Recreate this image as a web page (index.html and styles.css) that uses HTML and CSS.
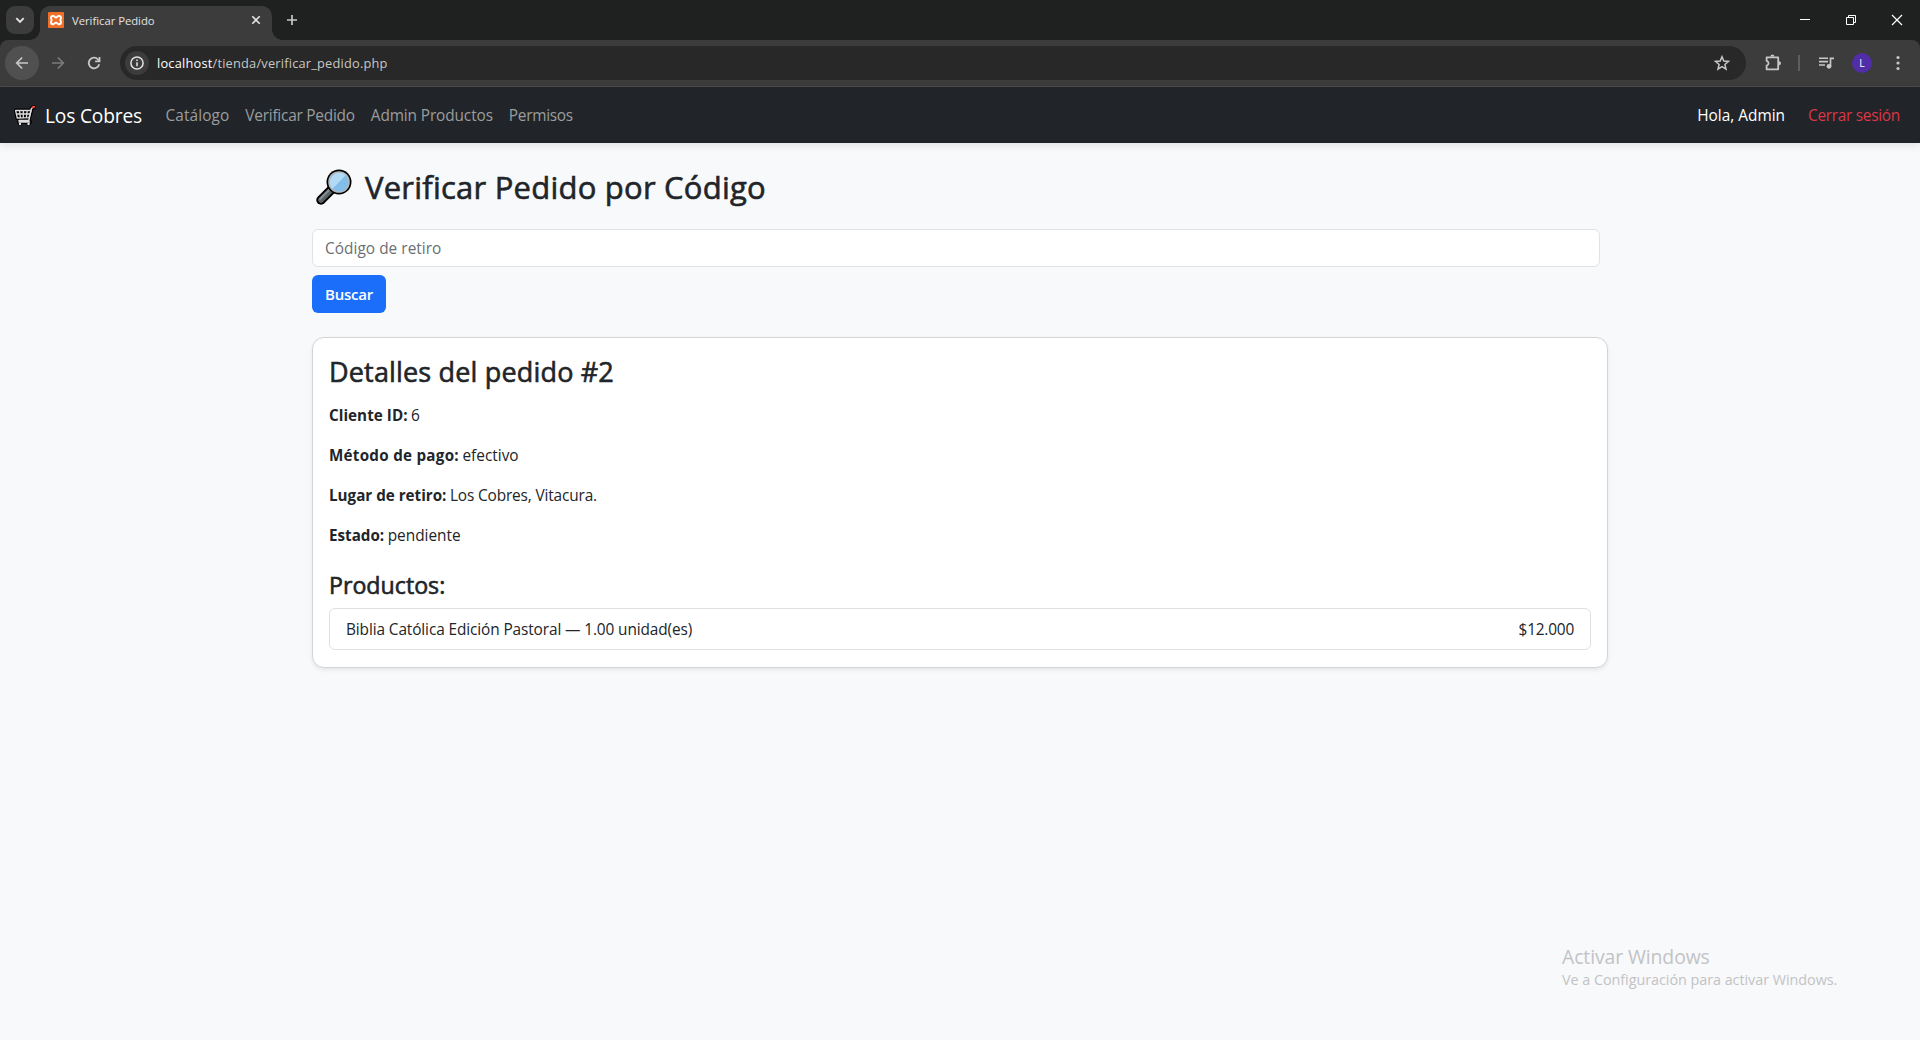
FILE: index.html
```html
<!DOCTYPE html>
<html lang="es">
<head>
<meta charset="utf-8">
<title>Verificar Pedido</title>
<link rel="stylesheet" href="styles.css">
</head>
<body>
<header class="browser">
  <div class="tabstrip">
    <div class="tab-search">
      <svg width="28" height="28" viewBox="0 0 28 28" fill="none" stroke="#e3e3e3" stroke-width="1.9"><path d="M10.3 12.2l3.7 3.7 3.7-3.7"/></svg>
    </div>
    <div class="tab">
      <svg width="16" height="16" viewBox="0 0 16 16"><rect width="16" height="16" rx="1" fill="#f0702a"/><path d="M5 4h.5C6.500 4 6.800 5.600 8 5.600S9.500 4 10.500 4h.5a2 2 0 0 1 2 2c0 .9-.7 1.300-.7 2.100s.7 1.200.7 2.100a2 2 0 0 1-2 2h-.5c-1 0-1.300-1.600-2.500-1.600s-1.500 1.600-2.500 1.600H5a2 2 0 0 1-2-2C3 9.300 3.700 8.900 3.700 8.100S3 6.900 3 6a2 2 0 0 1 2-2z" fill="none" stroke="#fff" stroke-width="1.900"/></svg>
      <span class="tab-title">Verificar Pedido</span>
      <svg class="tab-close" width="16" height="16" viewBox="0 0 16 16" stroke="#e3e3e3" stroke-width="1.600"><path d="M4.300 4.300l7.400 7.400M11.700 4.300l-7.400 7.400"/></svg>
    </div>
    <svg class="new-tab" width="16" height="16" viewBox="0 0 16 16" stroke="#c7c7c7" stroke-width="1.700"><path d="M8 3v10M3 8h10"/></svg>
    <div class="window-controls">
      <svg width="46" height="40" viewBox="0 0 46 40"><path d="M18 19.500h10" stroke="#fff"/></svg>
      <svg width="46" height="40" viewBox="0 0 46 40" fill="none" stroke="#fff"><path d="M18.500 17.500h7v7h-7zM20.500 17.500v-2h7v7h-2"/></svg>
      <svg width="46" height="40" viewBox="0 0 46 40" stroke="#fff" stroke-width="1.200"><path d="M18 15l10 10M28 15l-10 10"/></svg>
    </div>
  </div>
  <div class="toolbar">
    <div class="nav-button nav-button-active">
      <svg width="20" height="20" viewBox="0 0 20 20" fill="none" stroke="#c7c7c7" stroke-width="1.700"><path d="M16 10H5M10.200 4.500L4.700 10l5.500 5.500"/></svg>
    </div>
    <div class="nav-button">
      <svg width="20" height="20" viewBox="0 0 20 20" fill="none" stroke="#7b7b7b" stroke-width="1.700"><path d="M4 10h11M9.800 4.500l5.500 5.500-5.500 5.500"/></svg>
    </div>
    <div class="nav-button">
      <svg width="20" height="20" viewBox="0 0 20 20" fill="none" stroke="#c7c7c7" stroke-width="1.800"><path d="M15.200 11.200A5.300 5.300 0 1 1 14 6.500l1.200 1.500"/><path d="M15.500 4v4.400h-4.400"/></svg>
    </div>
    <div class="omnibox">
      <div class="site-info">
        <svg width="16" height="16" viewBox="0 0 16 16" fill="none" stroke="#e3e3e3" stroke-width="1.500"><circle cx="8" cy="8" r="6.100"/><path d="M8 7.300v4M8 4.600v1.500"/></svg>
      </div>
      <span class="url"><span class="host">localhost</span>/tienda/verificar_pedido.php</span>
      <svg class="star" width="18" height="18" viewBox="0 0 18 18" fill="none" stroke="#c7c7c7" stroke-width="1.500"><path d="M9 2.700l1.800 4.300 4.700.4-3.600 3.100 1.100 4.600L9 12.600l-4 2.500 1.100-4.600-3.600-3.100 4.700-.4z"/></svg>
    </div>
    <div class="actions">
      <svg class="extensions" width="20" height="20" viewBox="0 0 20 20"><path d="M3.600 4.300h11.600v12H3.600v-3.600c2.600-.6 2.600-4.200 0-4.800z" fill="none" stroke="#c7c7c7" stroke-width="1.800" stroke-linejoin="round"/><path d="M7.400 3.600a2 2 0 0 1 4 0zM16 8.200a2 2 0 0 1 0 4z" fill="#c7c7c7"/></svg>
      <span class="divider"></span>
      <svg class="media" width="18" height="18" viewBox="0 0 18 18"><path d="M2 4.300h9M2 7.600h9M2 11h6" stroke="#c7c7c7" stroke-width="1.600"/><path d="M13.500 12V4.300H17" fill="none" stroke="#c7c7c7" stroke-width="1.700"/><circle cx="12" cy="12.300" r="2.400" fill="#c7c7c7"/></svg>
      <span class="avatar">L</span>
      <svg class="menu" width="4" height="16" viewBox="0 0 4 16" fill="#c7c7c7"><circle cx="2" cy="2.500" r="1.600"/><circle cx="2" cy="8" r="1.600"/><circle cx="2" cy="13.500" r="1.600"/></svg>
    </div>
  </div>
</header>

<nav class="navbar">
  <div class="brand">
    <svg width="22" height="22" viewBox="0 0 22 22" fill="none" stroke-linecap="round" stroke-linejoin="round"><path d="M20 2l-2.200 1-3 11.500H5.500M1.800 5.500h15M3 11.500h12M1.800 5.500L3.500 13M5 17h11M6 19h.1M14.500 19h.1" stroke="#000" stroke-width="4"/><path d="M1.600 5.500h15.400L15 12.600 3.300 13zM2.400 9h13.600M5.500 5.500l.9 7.300M9.300 5.500v7.300M13.200 5.500l-.8 7.300" stroke="#dcdcdc" stroke-width="1.300"/><path d="M19 2.300l-1.600 1.500-2.600 11.800H5M5 17h10.500" stroke="#dcdcdc" stroke-width="1.500"/><path d="M6 19h.1M14.500 19h.1" stroke="#dcdcdc" stroke-width="2.400"/><path d="M18.800 2.300l1.400-.5" stroke="#f0453a" stroke-width="2.200"/></svg>
    <span class="brand-name">Los Cobres</span>
  </div>
  <div class="links">
    <a class="link-catalogo">Catálogo</a>
    <a class="link-verificar">Verificar Pedido</a>
    <a class="link-productos">Admin Productos</a>
    <a class="link-permisos">Permisos</a>
  </div>
  <div class="session">
    <span>Hola, Admin</span>
    <a class="logout">Cerrar sesión</a>
  </div>
</nav>

<main class="container">
  <h1>
    <svg width="38" height="38" viewBox="0 0 38 38"><path d="M16.500 21.500L6 32" stroke="#000" stroke-width="9.500" stroke-linecap="round"/><path d="M15.500 22.500L6 32" stroke="#596367" stroke-width="5.500" stroke-linecap="round"/><path d="M14 22L5 31" stroke="#859095" stroke-width="1.800" stroke-linecap="round"/><circle cx="24" cy="14" r="12.500" fill="#000"/><circle cx="24" cy="14" r="10.800" fill="#b9b9b9"/><circle cx="24" cy="14" r="9.600" fill="#83bdea"/><path d="M17.300 20.900a9.600 9.600 0 0 1 13.400-13.700z" fill="#b3daf4"/></svg>
    <span>Verificar Pedido por Código</span>
  </h1>
  <form class="search">
    <input type="text" placeholder="Código de retiro">
    <button type="button">Buscar</button>
  </form>
  <section class="card">
    <h2>Detalles del pedido #2</h2>
    <p><strong class="label-cliente">Cliente ID:</strong><span>6</span></p>
    <p><strong class="label-metodo">Método de pago:</strong><span>efectivo</span></p>
    <p><strong>Lugar de retiro:</strong><span class="lugar">Los Cobres, Vitacura.</span></p>
    <p><strong>Estado:</strong><span>pendiente</span></p>
    <h3>Productos:</h3>
    <ul class="products">
      <li><span class="product-name">Biblia Católica Edición Pastoral — 1.00 unidad(es)</span><span class="price">$12.000</span></li>
    </ul>
  </section>
</main>

<aside class="watermark">
  <div class="watermark-title">Activar Windows</div>
  <div class="watermark-text">Ve a Configuración para activar Windows.</div>
</aside>
</body>
</html>
```

FILE: styles.css
```css
* { box-sizing: border-box; }
body {
  margin: 0;
  height: 1040px;
  overflow: hidden;
  background: #f8f9fb;
  color: #212529;
  font: 15.4px/24px "Open Sans", "Noto Sans", sans-serif;
}
svg { display: block; flex: none; }
h1, h2, h3, p, ul { margin: 0; padding: 0; }

/* Browser frame */
.browser { height: 87px; background: #1f2120; border-bottom: 1px solid #4b4b4b; }
.tabstrip { display: flex; height: 40px; padding-left: 6px; }
.tab-search { width: 28px; height: 28px; margin-top: 6px; border-radius: 9px; background: #3c3c3c; }
.tab {
  position: relative;
  display: flex;
  align-items: center;
  width: 232px;
  height: 34px;
  margin: 6px 0 0 6px;
  padding: 0 8px 6px;
  border-radius: 10px 10px 0 0;
  background: #3c3c3c;
}
.tab::before, .tab::after { content: ""; position: absolute; bottom: 0; width: 10px; height: 10px; }
.tab::before { left: -10px; background: radial-gradient(circle at 0 0, transparent 9.500px, #3c3c3c 10px); }
.tab::after { right: -10px; background: radial-gradient(circle at 100% 0, transparent 9.500px, #3c3c3c 10px); }
.tab-title { flex: 1; margin: 2px 0 0 8px; color: #e3e3e3; font-size: 11.300px; letter-spacing: -.03px; }
.new-tab { margin: 12px 0 0 12px; }
.window-controls { display: flex; margin-left: auto; }
.toolbar {
  display: flex;
  align-items: center;
  height: 46px;
  padding-left: 5px;
  border-radius: 8px 8px 0 0;
  background: #3c3c3c;
}
.nav-button { display: grid; place-items: center; width: 34px; height: 34px; margin-right: 2px; border-radius: 50%; }
.nav-button-active { background: #505050; }
.omnibox {
  display: flex;
  align-items: center;
  width: 1626px;
  height: 34px;
  margin-left: 7px;
  padding: 0 15px 0 5px;
  border-radius: 17px;
  background: #282828;
}
.site-info { display: grid; place-items: center; width: 24px; height: 24px; border-radius: 50%; background: #3c3c3c; }
.url { margin-left: 8px; color: #c7c7c7; font-size: 12.800px; letter-spacing: .21px; }
.host { color: #fff; }
.star { margin-left: auto; }
.actions { display: flex; align-items: center; }
.extensions { margin-left: 17px; }
.divider { width: 2px; height: 16px; margin-left: 15px; background: #5e5e5e; }
.media { margin-left: 17px; }
.avatar {
  width: 20px;
  height: 20px;
  margin-left: 17px;
  border-radius: 50%;
  background: #512da8;
  color: #fff;
  font-size: 10.500px;
  line-height: 20px;
  text-align: center;
}
.menu { margin-left: 24px; }

/* Site navigation */
.navbar {
  display: flex;
  align-items: center;
  height: 56px;
  padding: 2px 20px 0 14px;
  background: #212529;
  box-shadow: 0 2px 8px rgba(0, 0, 0, .1);
}
.brand { display: flex; align-items: center; gap: 9px; color: #fff; }
.brand-name { width: 97px; font-size: 19.200px; letter-spacing: -.18px; white-space: nowrap; }
.links { display: flex; gap: 16px; margin-left: 23.500px; color: #9b9d9e; white-space: nowrap; }
.link-catalogo { letter-spacing: .1px; }
.link-verificar { letter-spacing: -.23px; }
.link-productos { letter-spacing: -.12px; }
.link-permisos { letter-spacing: -.28px; }
.session { display: flex; gap: 23px; margin-left: auto; color: #fff; }
.logout { color: #dc3545; letter-spacing: -.28px; }

/* Order lookup */
.container { width: 1320px; margin: 24px auto 0; padding: 0 12px; }
h1, h2, h3 { font-weight: 400; -webkit-text-stroke: .6px #212529; }
h1 {
  display: flex;
  align-items: center;
  gap: 12px;
  height: 38px;
  margin-bottom: 24px;
  padding: 2px 0 0 3px;
  font-size: 31px;
  line-height: 38px;
  letter-spacing: .23px;
}
.search { display: grid; gap: 8px; justify-items: start; }
.search input {
  width: 1288px;
  height: 38px;
  padding: 0 12px;
  border: 1px solid #dee2e6;
  border-radius: 6px;
  background: #fff;
  font: 15.400px "Open Sans", sans-serif;
  letter-spacing: .04px;
}
.search input::placeholder { color: #6b6f73; opacity: 1; }
.search button {
  width: 74px;
  height: 38px;
  padding: 0 0 1px;
  border: 0;
  border-radius: 6px;
  background: #1b6ef9;
  color: #fff;
  font: 600 15px "Open Sans", sans-serif;
  letter-spacing: -.22px;
}
.card {
  height: 331px;
  margin-top: 24px;
  padding: 16px;
  border: 1px solid #d2d4d5;
  border-radius: 12px;
  background: #fff;
  box-shadow: 0 2px 4px rgba(0, 0, 0, .075);
}
h2 { margin-bottom: 15px; padding-top: 1px; font-size: 27px; line-height: 33px; letter-spacing: .17px; }
.card p { display: flex; align-items: baseline; gap: 3.500px; height: 24px; margin-bottom: 16px; }
strong { font-size: 15.200px; letter-spacing: 0; }
.label-cliente { letter-spacing: .05px; }
.label-metodo { letter-spacing: .27px; }
.lugar { letter-spacing: -.14px; }
h3 { margin: 24px 0 8px; font-size: 23.200px; line-height: 29px; }
.products { list-style: none; }
.products li {
  display: flex;
  justify-content: space-between;
  height: 42px;
  padding: 9px 16px 7px;
  border: 1px solid #dee0e2;
  border-radius: 6px;
}
.product-name { letter-spacing: -.11px; }
.price { letter-spacing: -.2px; }

/* System overlay above the page */
.watermark { position: absolute; left: 1562px; top: 943px; color: #c2c3c4; white-space: nowrap; }
.watermark-title { font-size: 19.400px; line-height: 27px; letter-spacing: -.1px; }
.watermark-text { font-size: 14.400px; line-height: 19px; letter-spacing: -.05px; }
```
